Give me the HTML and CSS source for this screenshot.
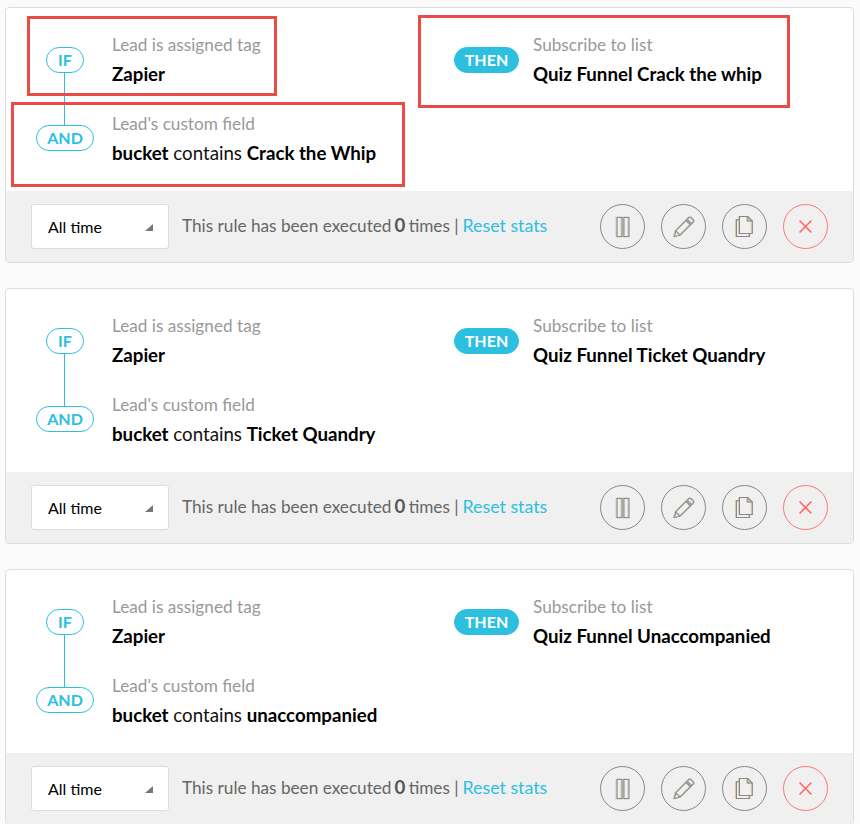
FILE: index.html
```html
<!DOCTYPE html>
<html lang="en">
<head>
    <meta charset="UTF-8">
    <title>Automation rules</title>
    <link rel="stylesheet" href="styles.css">
</head>
<body>

<svg class="icon-defs" width="0" height="0" aria-hidden="true">
    <symbol id="icon-pause" viewBox="0 0 24 24">
        <rect x="5.5" y="1.500" width="5.500" height="21"/>
        <rect x="13" y="1.500" width="5.500" height="21"/>
    </symbol>
    <symbol id="icon-pencil" viewBox="0 0 24 24">
        <path d="M1.500 22.500l1.600-6.400L17.600 1.600a1.400 1.400 0 0 1 2 0l2.800 2.800a1.400 1.400 0 0 1 0 2L7.900 20.900z"/>
        <path d="M3.100 16.100l4.800 4.800M15.600 3.600l4.800 4.800M14.400 4.800l4.800 4.800"/>
    </symbol>
    <symbol id="icon-copy" viewBox="0 0 24 24">
        <path d="M6 4H2.700v18.400H17V19"/>
        <path d="M6 .5h9l5 5V19H6z"/>
        <path d="M15 .5v5h5"/>
    </symbol>
    <symbol id="icon-close" viewBox="0 0 24 24">
        <path d="M4.500 4.500l15 15M19.500 4.500l-15 15"/>
    </symbol>
</svg>

<div class="rule">
    <div class="rule-body">
        <div class="conditions">
            <div class="row">
                <div class="tag-col"><span class="pill">IF</span></div>
                <div>
                    <div class="label">Lead is assigned tag</div>
                    <div class="value"><b>Zapier</b></div>
                </div>
            </div>
            <div class="row next">
                <div class="tag-col"><span class="pill wide">AND</span></div>
                <div>
                    <div class="label">Lead's custom field</div>
                    <div class="value"><b>bucket</b> contains <b>Crack the Whip</b></div>
                </div>
            </div>
        </div>
        <div class="action">
            <span class="pill solid">THEN</span>
            <div>
                <div class="label">Subscribe to list</div>
                <div class="value"><b>Quiz Funnel Crack the whip</b></div>
            </div>
        </div>
    </div>
    <div class="rule-foot">
        <div class="range">All time<i class="corner"></i></div>
        <p class="stats">This rule has been executed <b>0</b> times | <a href="#">Reset stats</a></p>
        <div class="tools">
            <button class="tool"><svg><use href="#icon-pause"/></svg></button>
            <button class="tool"><svg><use href="#icon-pencil"/></svg></button>
            <button class="tool"><svg><use href="#icon-copy"/></svg></button>
            <button class="tool danger"><svg><use href="#icon-close"/></svg></button>
        </div>
    </div>

    <!-- marcacoes vermelhas por cima do primeiro card -->
    <div class="mark mark-if"></div>
    <div class="mark mark-and"></div>
    <div class="mark mark-then"></div>
</div>

<div class="rule">
    <div class="rule-body">
        <div class="conditions">
            <div class="row">
                <div class="tag-col"><span class="pill">IF</span></div>
                <div>
                    <div class="label">Lead is assigned tag</div>
                    <div class="value"><b>Zapier</b></div>
                </div>
            </div>
            <div class="row next">
                <div class="tag-col"><span class="pill wide">AND</span></div>
                <div>
                    <div class="label">Lead's custom field</div>
                    <div class="value"><b>bucket</b> contains <b>Ticket Quandry</b></div>
                </div>
            </div>
        </div>
        <div class="action">
            <span class="pill solid">THEN</span>
            <div>
                <div class="label">Subscribe to list</div>
                <div class="value"><b>Quiz Funnel Ticket Quandry</b></div>
            </div>
        </div>
    </div>
    <div class="rule-foot">
        <div class="range">All time<i class="corner"></i></div>
        <p class="stats">This rule has been executed <b>0</b> times | <a href="#">Reset stats</a></p>
        <div class="tools">
            <button class="tool"><svg><use href="#icon-pause"/></svg></button>
            <button class="tool"><svg><use href="#icon-pencil"/></svg></button>
            <button class="tool"><svg><use href="#icon-copy"/></svg></button>
            <button class="tool danger"><svg><use href="#icon-close"/></svg></button>
        </div>
    </div>
</div>

<div class="rule">
    <div class="rule-body">
        <div class="conditions">
            <div class="row">
                <div class="tag-col"><span class="pill">IF</span></div>
                <div>
                    <div class="label">Lead is assigned tag</div>
                    <div class="value"><b>Zapier</b></div>
                </div>
            </div>
            <div class="row next">
                <div class="tag-col"><span class="pill wide">AND</span></div>
                <div>
                    <div class="label">Lead's custom field</div>
                    <div class="value"><b>bucket</b> contains <b>unaccompanied</b></div>
                </div>
            </div>
        </div>
        <div class="action">
            <span class="pill solid">THEN</span>
            <div>
                <div class="label">Subscribe to list</div>
                <div class="value"><b>Quiz Funnel Unaccompanied</b></div>
            </div>
        </div>
    </div>
    <div class="rule-foot">
        <div class="range">All time<i class="corner"></i></div>
        <p class="stats">This rule has been executed <b>0</b> times | <a href="#">Reset stats</a></p>
        <div class="tools">
            <button class="tool"><svg><use href="#icon-pause"/></svg></button>
            <button class="tool"><svg><use href="#icon-pencil"/></svg></button>
            <button class="tool"><svg><use href="#icon-copy"/></svg></button>
            <button class="tool danger"><svg><use href="#icon-close"/></svg></button>
        </div>
    </div>
</div>

</body>
</html>
```

FILE: styles.css
```css
* {
    margin: 0;
    padding: 0;
    box-sizing: border-box;
}

html, body {
    height: 824px;
    overflow: hidden;
}

body {
    font-family: 'Lato', sans-serif;
    font-size: 18px;
    background-color: #fbfbfb;
    color: #000;
    padding: 7px 6px 0 5px;
}

.icon-defs {
    position: absolute;
}

.rule {
    position: relative;
    height: 256px;
    margin-bottom: 25px;
    background-color: #fff;
    border: 1px solid #ddd;
    border-radius: 4px;
}

.rule-body {
    display: flex;
    height: 183px;
    padding: 21px 0 0 24px;
}

.conditions {
    width: 424px;
}

.row {
    display: flex;
    align-items: center;
    height: 60px;
}

.row.next {
    margin-top: 19px;
}

.tag-col {
    width: 70px;
    margin-right: 12px;
    display: flex;
    justify-content: center;
}

.pill {
    position: relative;
    display: inline-block;
    height: 26px;
    margin-top: 2px;
    line-height: 24px;
    min-width: 38px;
    text-align: center;
    font-size: 16px;
    font-weight: 700;
    color: #2cbfe0;
    background-color: #fff;
    border: 1px solid #2cbfe0;
    border-radius: 13px;
}

.pill.wide {
    width: 58px;
    margin-top: 0;
}

/* linha entre IF e AND */
.row.next .pill::before {
    content: "";
    position: absolute;
    left: 27px;
    top: -54px;
    width: 1px;
    height: 53px;
    background-color: #2cbfe0;
}

.pill.solid {
    width: 65px;
    flex-shrink: 0;
    color: #fff;
    background-color: #2cbfe0;
    margin-right: 14px;
}

.action {
    display: flex;
    align-items: center;
    height: 60px;
}

.label {
    font-size: 17.2px;
    color: #999;
    line-height: 30px;
    padding-top: 1px;
    margin-bottom: -1px;
}

.value {
    font-size: 18.7px;
    line-height: 30px;
    color: #111;
}

.value b {
    color: #000;
}

.rule-foot {
    display: flex;
    align-items: center;
    height: 71px;
    padding: 0 25px;
    background-color: #f0f0f0;
    border-radius: 0 0 4px 4px;
}

.range {
    position: relative;
    width: 138px;
    height: 45px;
    line-height: 43px;
    padding-left: 16px;
    font-size: 16px;
    background-color: #fff;
    border: 1px solid #ddd;
    border-radius: 3px;
}

.corner {
    position: absolute;
    right: 15px;
    top: 19px;
    width: 0;
    height: 0;
    border-left: 8px solid transparent;
    border-bottom: 7px solid #777;
}

.stats {
    margin: 0 0 3px 13px;
    font-size: 17.2px;
    color: #666;
}

.stats b {
    font-size: 18.7px;
    margin: 0 -1px 0 -1.5px;
    color: #555;
}

.stats a {
    font-size: 17.8px;
    margin-left: -0.5px;
    color: #2cbfe0;
    text-decoration: none;
}

.tools {
    margin-left: auto;
    display: flex;
    gap: 16px;
}

.tool {
    display: flex;
    align-items: center;
    justify-content: center;
    width: 45px;
    height: 45px;
    background: transparent;
    border: 1px solid #888;
    border-radius: 50%;
    color: #888;
}

.tool svg {
    width: 22px;
    height: 22px;
    fill: none;
    stroke: currentColor;
    stroke-width: 1.1;
    filter: drop-shadow(-0.6px 0 0 rgba(240, 180, 110, 0.55)) drop-shadow(0.6px 0 0 rgba(110, 190, 240, 0.45));
}

.tool.danger {
    border-color: #f77;
    color: #f66;
}

.tool.danger svg {
    width: 19px;
    height: 19px;
    stroke-width: 2;
    filter: none;
}

.mark {
    position: absolute;
    border: 3px solid #e94b46;
}

.mark-if {
    left: 21px;
    top: 8px;
    width: 250px;
    height: 80px;
}

.mark-and {
    left: 5px;
    top: 94px;
    width: 394px;
    height: 85px;
}

.mark-then {
    left: 412px;
    top: 7px;
    width: 372px;
    height: 93px;
}
```
